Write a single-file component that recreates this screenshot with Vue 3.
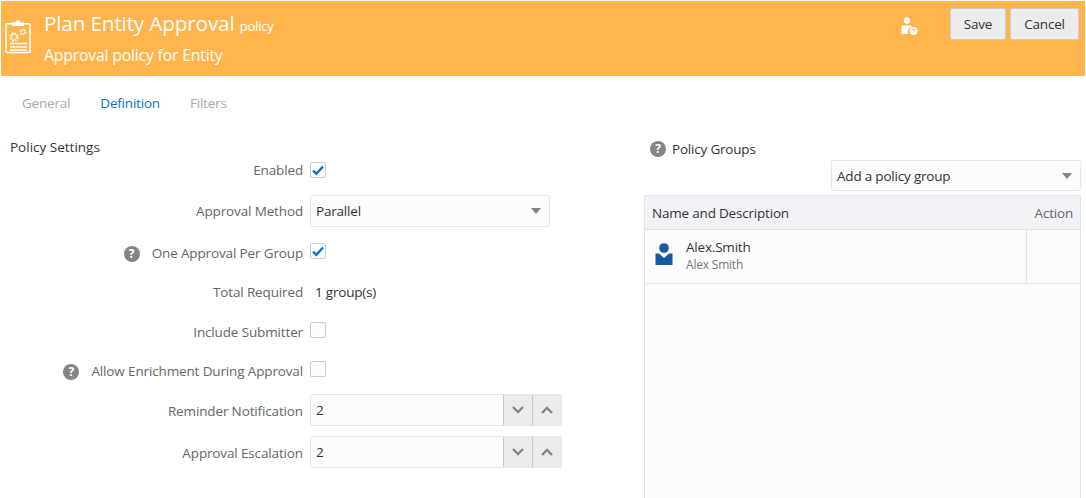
<script setup>
const rows = [
  { label: 'Enabled', type: 'check', checked: true, h: 41, first: true },
  { label: 'Approval Method', type: 'select', h: 43 },
  { label: 'One Approval Per Group', type: 'check', checked: true, help: true, h: 39 },
  { label: 'Total Required', type: 'text', h: 40 },
  { label: 'Include Submitter', type: 'check', h: 40 },
  { label: 'Allow Enrichment During Approval', type: 'check', help: true, h: 38 },
  { label: 'Reminder Notification', type: 'num', h: 42 },
  { label: 'Approval Escalation', type: 'num', h: 42 },
]
</script>

<template>
  <div class="page">
    <header class="hero">
      <svg class="clip" width="26" height="36" viewBox="0 0 26 36" fill="none">
        <path d="M7 5.800H2a1 1 0 0 0-1 1V33.500a1 1 0 0 0 1 1h22a1 1 0 0 0 1-1V6.800a1 1 0 0 0-1-1h-5" stroke="#fff" stroke-width="1.600"/>
        <path d="M7 8V4.500h3.500a2.500 2.500 0 0 1 5 0H19V8z" fill="#fff"/>
        <circle cx="9" cy="19" r="3.300" stroke="#fff" stroke-width="2.600" stroke-dasharray="1.700 .9"/>
        <circle cx="18" cy="14" r="2.300" stroke="#fff" stroke-width="2" stroke-dasharray="1.300 .8"/>
        <path d="M5 25.500h17M5 29h17M5 32h17" stroke="#fff" stroke-width="1.400"/>
      </svg>
      <div class="titles">
        <div class="title">Plan Entity Approval <small>policy</small></div>
        <div class="sub">Approval policy for Entity</div>
      </div>
      <svg class="who" width="18" height="20" viewBox="0 0 18 20">
        <circle cx="7" cy="4.500" r="3.200" fill="#fff"/>
        <path d="M1.500 9.500h9.500l1 1.500a5 5 0 0 0-4 7H1.500z" fill="#fff"/>
        <circle cx="13.500" cy="15" r="4" fill="#fff"/>
        <path d="M12 14c.3-1.400 3-1.400 3 0 0 1-1.500 1-1.500 2.300" fill="none" stroke="#ffb44d" stroke-width="1"/>
      </svg>
      <button class="btn save">Save</button>
      <button class="btn">Cancel</button>
    </header>

    <nav class="tabs">
      <span>General</span>
      <span class="on">Definition</span>
      <span>Filters</span>
    </nav>

    <main class="body">
      <section class="left">
        <h2>Policy Settings</h2>
        <div v-for="r in rows" :key="r.label" class="row" :class="'t-' + r.type" :style="{ height: r.h + 'px' }">
          <div class="lab">
            <span v-if="r.help" class="q">?</span>
            <span>{{ r.label }}</span>
          </div>
          <div class="ctl">
            <span v-if="r.type === 'check'" class="box" :class="{ raised: !r.first }">
              <svg v-if="r.checked" width="14" height="14" viewBox="0 0 14 14"><path d="M2 7.500l3.300 3.300L12 3.500" fill="none" stroke="#0572ce" stroke-width="2.400"/></svg>
            </span>
            <div v-else-if="r.type === 'select'" class="sel method">
              <span>Parallel</span><i class="tri"></i>
            </div>
            <span v-else-if="r.type === 'text'" class="val">1 group(s)</span>
            <div v-else class="num">
              <span class="numv">2</span>
              <span class="st"><svg width="14" height="10" viewBox="0 0 14 10"><path d="M2 2l5 5 5-5" fill="none" stroke="#858585" stroke-width="2.400"/></svg></span>
              <span class="st"><svg width="14" height="10" viewBox="0 0 14 10"><path d="M2 8l5-5 5 5" fill="none" stroke="#858585" stroke-width="2.400"/></svg></span>
            </div>
          </div>
        </div>
      </section>

      <section class="right">
        <div class="rhead"><span class="q">?</span><span>Policy Groups</span></div>
        <div class="sel add"><span>Add a policy group</span><i class="tri"></i></div>
        <div class="table">
          <div class="thead"><span class="n">Name and Description</span><span class="a">Action</span></div>
          <div class="trow">
            <div class="cell">
              <svg class="person" width="18" height="22" viewBox="0 0 18 22">
                <circle cx="9" cy="5" r="4.800" fill="#15599e"/>
                <path d="M.500 10.500h3.500L9 15l5-4.500h3.500V22H.500z" fill="#15599e"/>
              </svg>
              <div>
                <div class="nm">Alex.Smith</div>
                <div class="ds">Alex Smith</div>
              </div>
            </div>
            <div class="act"></div>
          </div>
        </div>
      </section>
    </main>
  </div>
</template>

<style>
html, body { margin: 0; background: #fff; }
</style>

<style scoped>
.page { width: 1086px; height: 498px; overflow: hidden; background: #fff; font: 13.500px/18px "Open Sans", sans-serif; color: #333; letter-spacing: -.2px; }
.hero { height: 75px; margin: 1px 1px 0; background: #ffb44d; display: flex; align-items: flex-start; color: #fff; box-sizing: border-box; }
.clip { margin: 17px 0 0 4px; flex: none; }
.titles { margin-left: 13px; }
.title { font-size: 20.800px; line-height: 26px; margin-top: 9px; }
.title small { font-size: 13px; }
.sub { font-size: 15.800px; line-height: 22px; margin-top: 5px; }
.who { margin: 15px 0 0 auto; }
.btn { height: 32px; margin: 7px 6px 0 0; padding: 0; border: 1px solid #c4ced7; border-radius: 2px; background: #ececec; font: inherit; letter-spacing: inherit; color: #333; width: 56px; }
.save { margin-left: 32px; margin-right: 4px; }
.btn + .btn { width: 69px; }
.tabs { height: 54px; display: flex; align-items: center; gap: 30px; padding-left: 22px; color: #aaa; }
.tabs .on { color: #0572ce; }
.body { display: flex; justify-content: space-between; }
.left { width: 600px; }
h2 { margin: 8px 0 0 10px; font: inherit; letter-spacing: 0; height: 11px; line-height: 18px; color: #333; }
.row { display: flex; align-items: center; }
.lab { width: 303px; display: flex; justify-content: flex-end; align-items: center; color: #666; flex: none; letter-spacing: -.14px; }
.ctl { margin-left: 7px; display: flex; }
.t-select .lab, .t-select .ctl, .t-num .ctl { padding-bottom: 2px; }
.q { width: 16px; height: 16px; border-radius: 50%; background: #858585; color: #fff; font: bold 12px/16px "Open Sans", sans-serif; text-align: center; flex: none; letter-spacing: 0; }
.lab .q { margin-right: 12px; align-self: flex-end; }
.box { width: 14px; height: 14px; border: 1px solid #c4ced7; border-radius: 2px; background: #fcfcfc; display: flex; }
.raised { margin-top: -4px; }
.sel { box-sizing: border-box; height: 32px; border: 1px solid #e4e8ea; border-radius: 2px; background: #fcfcfc; display: flex; align-items: center; justify-content: space-between; padding: 0 8px 0 5px; color: #333; }
.method { width: 240px; }
.tri { width: 0; height: 0; border: 5px solid transparent; border-top: 6px solid #858585; border-bottom: 0; }
.val { padding-left: 5px; }
.num { box-sizing: border-box; width: 252px; height: 32px; border: 1px solid #e4e8ea; border-radius: 2px; background: #fcfcfc; display: flex; align-items: stretch; }
.numv { flex: 1; padding-left: 5px; line-height: 30px; }
.st { width: 28px; background: #ececec; border-left: 1px solid #c8c8c8; display: flex; align-items: center; justify-content: center; }
.right { width: 437px; margin-right: 5px; }
.rhead { display: flex; align-items: center; gap: 6px; margin: 10px 0 0 6px; height: 18px; }
.add { width: 250px; margin: 2px 0 0 187px; height: 31px; padding-left: 5px; }
.table { box-sizing: border-box; height: 306px; margin-top: 4px; border: 1px solid #dfe4ea; border-bottom: 0; background: #fcfcfc; }
.thead { height: 34px; box-sizing: border-box; background: #f1f3f7; border-bottom: 1px solid #dfe4ea; display: flex; align-items: center; justify-content: space-between; padding: 0 7px; }
.a { color: #666; }
.trow { height: 54px; box-sizing: border-box; border-bottom: 1px solid #dfe4ea; display: flex; }
.cell { flex: 1; display: flex; align-items: center; gap: 13px; padding: 0 0 2px 10px; }
.person { margin-bottom: 4px; }
.act { width: 53px; border-left: 1px solid #dfe4ea; }
.nm { line-height: 19px; }
.ds { font-size: 12px; line-height: 16px; color: #777; }
</style>
